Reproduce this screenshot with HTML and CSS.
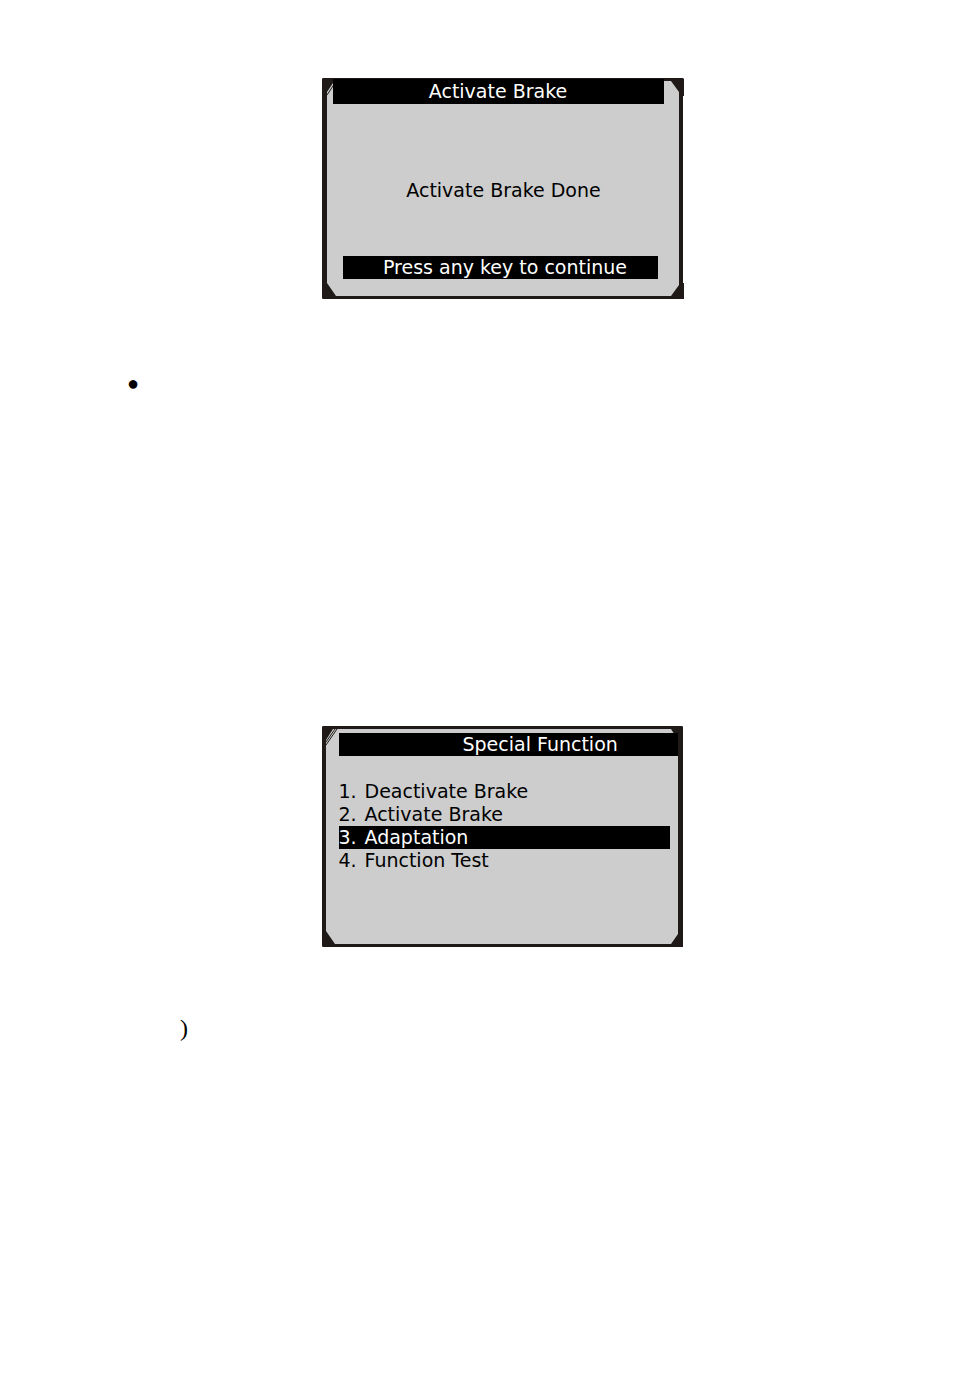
FILE: index.html
```
<!DOCTYPE html>
<html lang="en">
<head>
  <meta charset="UTF-8" />
  <meta name="viewport" content="width=device-width, initial-scale=1.0"/>
  <title>Special Function</title>
  <link rel="stylesheet" href="styles.css">
</head>
<body>
  <main class="page">
    <section class="screen screen-done">
      <svg class="corner top-left" viewBox="0 0 16 20"><path d="M1 0H12L11 5L5 14V20H0V1Z" fill="#1f1a17"/><path d="M5 17L13 5" stroke="#1f1a17"/></svg>
      <svg class="corner top-right" viewBox="0 0 16 20"><path d="M3 0H15L16 1V18H15V20H11V14L3 3Z" fill="#1f1a17"/></svg>
      <svg class="corner bottom-left" viewBox="0 0 16 20"><path d="M0 0H5V4L14 17V20H1L0 19Z" fill="#1f1a17"/></svg>
      <svg class="corner bottom-right" viewBox="0 0 16 20"><path d="M3 20V17L11 6V0H15V4H16V20Z" fill="#1f1a17"/></svg>
      <h2 class="bar title">Activate Brake</h2>
      <p class="message">Activate Brake Done</p>
      <p class="bar prompt">Press any key to continue</p>
    </section>

    <p class="bullet">●</p>

    <section class="screen screen-menu">
      <svg class="corner top-left" viewBox="0 0 16 20"><path d="M1 0H11V3L4 14V20H0V1Z" fill="#1f1a17"/><path d="M4 16L13 3M4 19L15 3" stroke="#1f1a17"/></svg>
      <svg class="corner top-right" viewBox="0 0 16 20"><path d="M4 0H15L16 1V20H11V14L4 3Z" fill="#1f1a17"/></svg>
      <svg class="corner bottom-left" viewBox="0 0 16 20"><path d="M0 0H4V4L13 17V20H1L0 19Z" fill="#1f1a17"/></svg>
      <svg class="corner bottom-right" viewBox="0 0 16 20"><path d="M4 20V17L11 7V0H16V20Z" fill="#1f1a17"/></svg>
      <h2 class="bar title">Special Function</h2>
      <ol class="menu">
        <li><span class="num">1.</span>Deactivate Brake</li>
        <li><span class="num">2.</span>Activate Brake</li>
        <li class="bar"><span class="num">3.</span>Adaptation</li>
        <li><span class="num">4.</span>Function Test</li>
      </ol>
    </section>

    <p class="step">)</p>
  </main>
</body>
</html>
```

FILE: styles.css
```
* {
  box-sizing: border-box;
}
body {
  margin: 0;
  background: #fff;
  color: #000;
  font-family: Verdana, "DejaVu Sans", sans-serif;
}
.page {
  display: flex;
  flex-direction: column;
  padding: 78px 77px 78px 127px;
}
h2, p, ol {
  margin: 0;
  padding: 0;
  font-size: inherit;
  font-weight: normal;
}

/* device display */
.screen {
  position: relative;
  align-self: center;
  width: 100%;
  max-width: 361px;
  min-height: 221px;
  border: 3px solid #1f1a17;
  border-radius: 2px;
  background: #cdcdcd;
  font-size: 19px;
  line-height: 23px;
}
.screen-done {
  border-left-width: 5px;
  border-right-width: 4px;
}
.screen-menu {
  border-left-width: 4px;
  border-right-width: 5px;
}
.bar {
  position: relative;
  background: #000;
  color: #fff;
}
.corner {
  position: absolute;
  width: 16px;
  height: 20px;
}
.top-left {
  top: -3px;
  left: -4px;
}
.top-right {
  top: -3px;
  right: -5px;
}
.bottom-left {
  bottom: -3px;
  left: -4px;
}
.bottom-right {
  bottom: -3px;
  right: -5px;
}
.screen-done .top-left,
.screen-done .bottom-left {
  left: -5px;
}

/* message screen */
.screen-done .title {
  margin: -2px 15px 0 6px;
  padding: 1px 0;
  text-align: center;
}
.message {
  margin-top: 75px;
  padding-left: 2px;
  text-align: center;
}
.prompt {
  margin: 54px 21px 0 16px;
  padding-left: 10px;
  text-align: center;
}

/* menu screen */
.screen-menu .title {
  margin: 4px 0 0 13px;
  padding-left: 124px;
}
.menu {
  margin: 24px 8px 0 13px;
  list-style: none;
}
.num {
  display: inline-block;
  width: 26px;
}

.bullet {
  margin-top: 72px;
  font-family: "Liberation Serif", serif;
  font-size: 20px;
  line-height: 24px;
}
.bullet + .screen {
  margin-top: 331px;
}
.step {
  margin-top: 67px;
  padding-left: 53px;
  font-family: "Liberation Serif", serif;
  font-size: 24px;
  line-height: 28px;
}
```
